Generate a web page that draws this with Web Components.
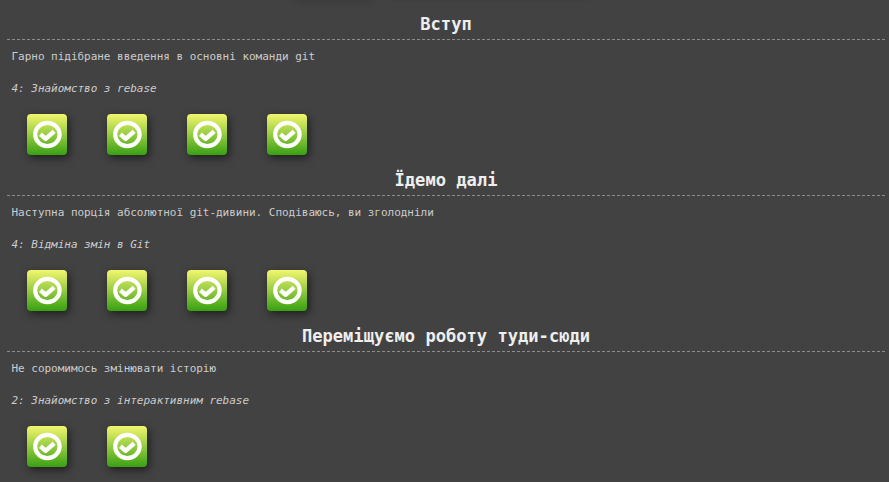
<!DOCTYPE html>
<html lang="uk">
<head>
<meta charset="utf-8">
<title>Git</title>
<style>
html,body{margin:0;height:100%;overflow:hidden;background:#424242}
</style>
</head>
<body>
<level-list></level-list>
<script>
class LevelIcon extends HTMLElement {
  constructor() {
    super();
    this.attachShadow({mode: 'open'}).innerHTML = `
      <style>
        :host{display:block;width:40px;height:41px;border-radius:4px;
          background:linear-gradient(#f3f66f,#38a012);box-shadow:2px 3px 9px rgba(0,0,0,.55)}
        svg{display:block}
      </style>
      <svg width="40" height="41" viewBox="0 0 40 41" fill="none" stroke="#fff">
        <ellipse cx="20.4" cy="20.5" rx="12.2" ry="11.6" stroke-width="4.2"/>
        <path d="M13.4 20.3L18.6 24.7L27.2 17.4" stroke-width="4.4" stroke-linejoin="round"/>
      </svg>`;
  }
}
customElements.define('level-icon', LevelIcon);

class LevelSection extends HTMLElement {
  constructor() {
    super();
    const n = +this.getAttribute('count');
    this.attachShadow({mode: 'open'}).innerHTML = `
      <style>
        :host{display:block;height:156px;font-family:"DejaVu Sans Mono","Liberation Mono",monospace;
          font-size:11px;color:#ccc}
        h3{margin:0;height:30px;line-height:29px;box-sizing:border-box;text-align:center;
          font-size:17.1px;font-weight:700;color:#eee;border-bottom:1px dashed #8c8c8c;white-space:nowrap}
        p{margin:0 0 0 4.5px;height:32px;line-height:34px;white-space:nowrap;letter-spacing:-.025px}
        .name{font-style:italic}
        .row{display:flex;gap:40px;padding:10px 0 0 20px}
      </style>
      <h3><slot name="title"></slot></h3>
      <p><slot name="about"></slot></p>
      <p class="name"><slot name="level"></slot></p>
      <div class="row">${'<level-icon></level-icon>'.repeat(n)}</div>`;
  }
}
customElements.define('level-section', LevelSection);

class LevelList extends HTMLElement {
  constructor() {
    super();
    this.attachShadow({mode: 'open'}).innerHTML = `
      <style>
        :host{display:block;height:482px;box-sizing:border-box;padding:0 4px 0 7px;overflow:hidden}
        .tabs{display:flex;gap:17px;height:10px;padding-left:289px}
        .tabs i{height:10px;margin-top:-11px;box-shadow:0 0 8px rgba(0,0,0,.25)}
        .tabs i:first-child{width:76px}
        .tabs i:last-child{width:202px;box-shadow:0 0 5px rgba(0,0,0,.1)}
      </style>
      <div class="tabs"><i></i><i></i></div>
      <level-section count="4"><span slot="title">Вступ</span><span slot="about">Гарно підібране введення в основні команди git</span><span slot="level">4: Знайомство з rebase</span></level-section>
      <level-section count="4"><span slot="title">Їдемо далі</span><span slot="about">Наступна порція абсолютної git-дивини. Сподіваюсь, ви зголодніли</span><span slot="level">4: Відміна змін в Git</span></level-section>
      <level-section count="2"><span slot="title">Переміщуємо роботу туди-сюди</span><span slot="about">Не соромимось змінювати історію</span><span slot="level">2: Знайомство з інтерактивним rebase</span></level-section>`;
  }
}
customElements.define('level-list', LevelList);
</script>
</body>
</html>
